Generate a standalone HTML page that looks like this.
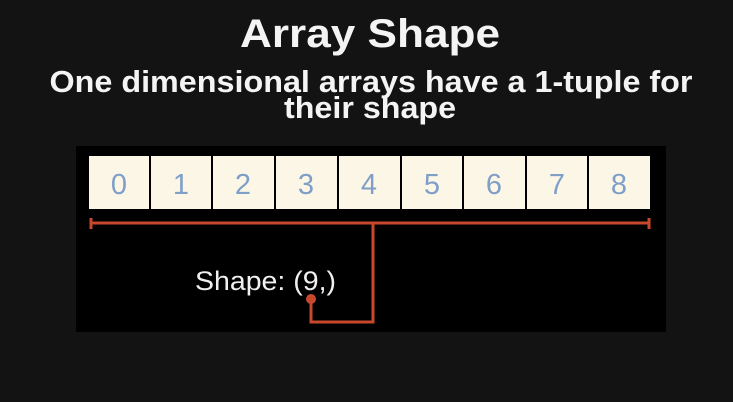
<!DOCTYPE html>
<html><head><meta charset="utf-8"><style>
html,body{margin:0;padding:0;background:#131313;width:733px;height:402px;overflow:hidden}
</style></head><body>
<svg width="733" height="402" xmlns="http://www.w3.org/2000/svg" style="display:block">
<rect width="733" height="402" fill="#131313"/>
<g font-family="Liberation Sans, sans-serif" font-weight="bold" fill="#f4f4f4" text-anchor="middle">
<text x="370" y="47" font-size="40" textLength="260" lengthAdjust="spacingAndGlyphs">Array Shape</text>
<text x="371" y="92" font-size="31" textLength="643" lengthAdjust="spacingAndGlyphs">One dimensional arrays have a 1-tuple for</text>
<text x="370" y="118" font-size="31" textLength="172" lengthAdjust="spacingAndGlyphs">their shape</text>
</g>
<rect x="76" y="146" width="590" height="186" fill="#000"/>
<g fill="#fcf6e6">
<rect x="89" y="156" width="60" height="53"/>
<rect x="151" y="156" width="60" height="53"/>
<rect x="213" y="156" width="61" height="53"/>
<rect x="276" y="156" width="61" height="53"/>
<rect x="339" y="156" width="61" height="53"/>
<rect x="402" y="156" width="60" height="53"/>
<rect x="464" y="156" width="61" height="53"/>
<rect x="527" y="156" width="60" height="53"/>
<rect x="589" y="156" width="61" height="53"/>
</g>
<g font-family="Liberation Sans, sans-serif" font-size="29" fill="#7f9fc8" text-anchor="middle">
<text x="119" y="194">0</text><text x="181" y="194">1</text><text x="243" y="194">2</text>
<text x="306" y="194">3</text><text x="369" y="194">4</text><text x="432" y="194">5</text>
<text x="494" y="194">6</text><text x="557" y="194">7</text><text x="619" y="194">8</text>
</g>
<g stroke="#c8482c" stroke-width="3" fill="none">
<path d="M91 223 H649"/>
<path d="M91 218 V229 M649 218 V229"/>
<path d="M373 223 V322 H311 V300"/>
</g>
<circle cx="311" cy="299" r="5" fill="#c8482c"/>
<text x="195" y="290" font-family="Liberation Sans, sans-serif" font-size="27" fill="#f0f0f0" textLength="141" lengthAdjust="spacingAndGlyphs">Shape: (9,)</text>
</svg>
</body></html>
